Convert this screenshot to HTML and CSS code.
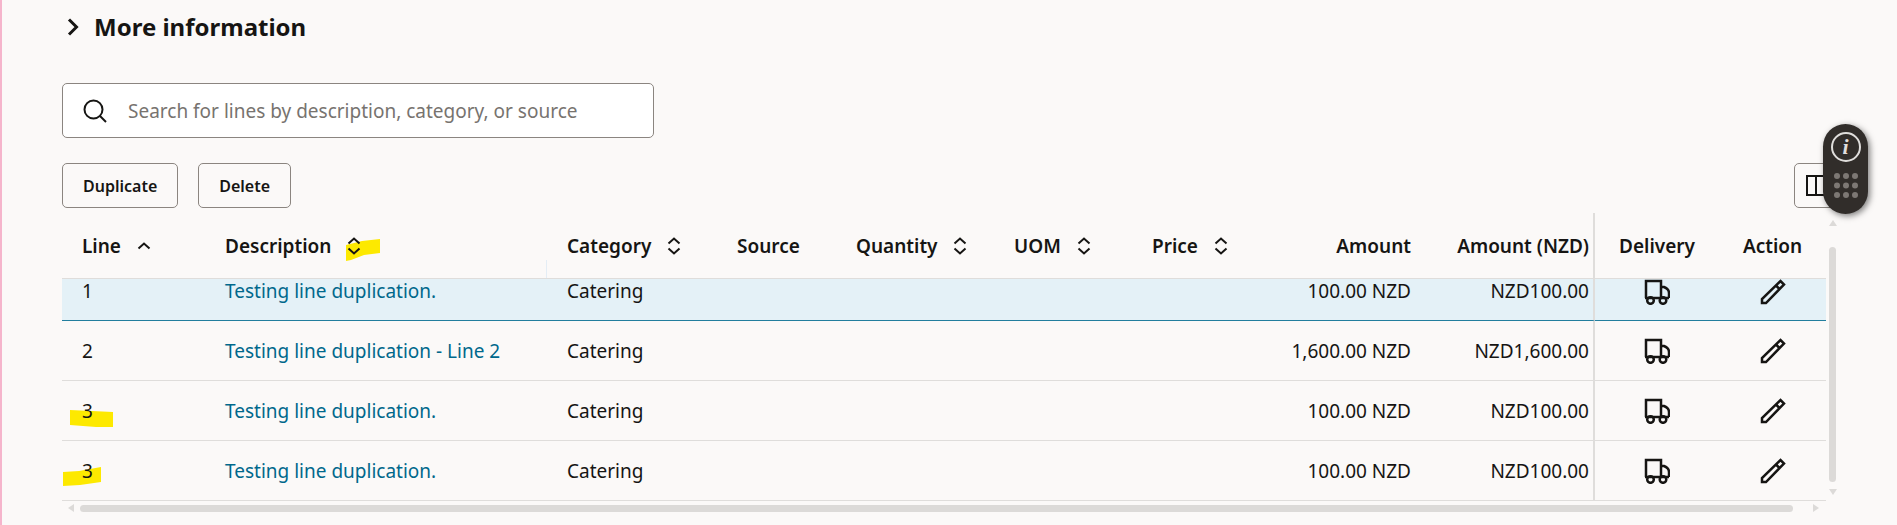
FILE: index.html
```html
<!DOCTYPE html>
<html lang="en">
<head>
  <meta charset="UTF-8">
  <meta name="viewport" content="width=device-width, initial-scale=1.0">
  <title>Requisition lines</title>
  <link rel="stylesheet" href="styles.css">
</head>
<body>
  <svg class="defs" aria-hidden="true">
    <symbol id="sort" viewBox="0 0 14 18"><path d="M1.5 6.500 7 1.500l5.500 5M1.500 11.500 7 16.500l5.500-5"/></symbol>
    <symbol id="sort-up" viewBox="0 0 14 18"><path d="M1.500 11.500 7 6.500l5.500 5"/></symbol>
    <symbol id="truck" viewBox="0 0 26 26"><path d="M2 19V2h15v17M1 19h24M17 8h3q5 2 5 6v5"/><circle class="wheel" cx="6.500" cy="21.500" r="3.300"/><circle class="wheel" cx="19" cy="21.500" r="3.300"/></symbol>
    <symbol id="pencil" viewBox="0 0 26 26"><path d="M2 24v-4L20.500 2 24 5.500 6 24zM16 6.500l3.500 3.500"/></symbol>
  </svg>

  <main class="page">
    <h2 class="more">
      <button type="button" aria-expanded="false">
        <svg class="chevron" viewBox="0 0 12 18"><path d="M2 1.500 9.500 9 2 16.500"/></svg>
        More information
      </button>
    </h2>

    <label class="search">
      <svg class="search-icon" viewBox="0 0 24 24"><circle cx="10.500" cy="10.500" r="9"/><path d="m17 17 6 6"/></svg>
      <input type="text" aria-label="Search lines" placeholder="Search for lines by description, category, or source">
    </label>

    <div class="toolbar">
      <button type="button" class="btn">Duplicate</button>
      <button type="button" class="btn">Delete</button>
      <button type="button" class="btn btn-columns" aria-label="Columns">
        <svg viewBox="0 0 29 21"><path d="M1 1h27v19H1zM10 1v19M19 1v19"/></svg>
      </button>
    </div>

    <div class="grid">
      <table class="lines">
        <colgroup>
          <col class="c-line"><col class="c-desc"><col class="c-cat"><col class="c-source"><col class="c-qty"><col class="c-uom">
          <col class="c-price"><col class="c-amount"><col class="c-nzd"><col class="c-delivery"><col class="c-action">
        </colgroup>
        <thead>
          <tr>
            <th>Line <svg class="sort"><use href="#sort-up"/></svg></th>
            <th class="resize">
              <svg class="mark mark-head" viewBox="0 0 34 22"><path d="M0 6 16 2 34 0v14L18 16 5 21 0 22z"/></svg>
              <span>Description <svg class="sort"><use href="#sort"/></svg></span>
            </th>
            <th>Category <svg class="sort"><use href="#sort"/></svg></th>
            <th>Source</th>
            <th>Quantity <svg class="sort"><use href="#sort"/></svg></th>
            <th>UOM <svg class="sort"><use href="#sort"/></svg></th>
            <th>Price <svg class="sort"><use href="#sort"/></svg></th>
            <th class="num">Amount</th>
            <th class="num nzd">Amount (NZD)</th>
            <th class="mid">Delivery</th>
            <th class="mid">Action</th>
          </tr>
        </thead>
        <tbody>
          <tr class="selected">
            <td>1</td>
            <td><a href="#">Testing line duplication.</a></td>
            <td>Catering</td>
            <td></td><td></td><td></td><td></td>
            <td class="num">100.00 NZD</td>
            <td class="num nzd">NZD100.00</td>
            <td class="mid"><button type="button" class="icon-btn" aria-label="Delivery"><svg><use href="#truck"/></svg></button></td>
            <td class="mid"><button type="button" class="icon-btn" aria-label="Edit"><svg><use href="#pencil"/></svg></button></td>
          </tr>
          <tr>
            <td>2</td>
            <td><a href="#">Testing line duplication - Line 2</a></td>
            <td>Catering</td>
            <td></td><td></td><td></td><td></td>
            <td class="num">1,600.00 NZD</td>
            <td class="num nzd">NZD1,600.00</td>
            <td class="mid"><button type="button" class="icon-btn" aria-label="Delivery"><svg><use href="#truck"/></svg></button></td>
            <td class="mid"><button type="button" class="icon-btn" aria-label="Edit"><svg><use href="#pencil"/></svg></button></td>
          </tr>
          <tr>
            <td>
              <svg class="mark mark-a" viewBox="0 0 43 17"><path d="M0 0 22 1 43 2v15H26L0 15z"/></svg>
              <span>3</span>
            </td>
            <td><a href="#">Testing line duplication.</a></td>
            <td>Catering</td>
            <td></td><td></td><td></td><td></td>
            <td class="num">100.00 NZD</td>
            <td class="num nzd">NZD100.00</td>
            <td class="mid"><button type="button" class="icon-btn" aria-label="Delivery"><svg><use href="#truck"/></svg></button></td>
            <td class="mid"><button type="button" class="icon-btn" aria-label="Edit"><svg><use href="#pencil"/></svg></button></td>
          </tr>
          <tr>
            <td>
              <svg class="mark mark-b" viewBox="0 0 38 19"><path d="M0 5 16 4 38 0v15L17 18 0 19z"/></svg>
              <span>3</span>
            </td>
            <td><a href="#">Testing line duplication.</a></td>
            <td>Catering</td>
            <td></td><td></td><td></td><td></td>
            <td class="num">100.00 NZD</td>
            <td class="num nzd">NZD100.00</td>
            <td class="mid"><button type="button" class="icon-btn" aria-label="Delivery"><svg><use href="#truck"/></svg></button></td>
            <td class="mid"><button type="button" class="icon-btn" aria-label="Edit"><svg><use href="#pencil"/></svg></button></td>
          </tr>
        </tbody>
      </table>

      <div class="vbar">
        <svg class="arrow" viewBox="0 0 8 6"><path d="M0 6 4 0l4 6z"/></svg>
        <div class="thumb"></div>
        <svg class="arrow" viewBox="0 0 8 6"><path d="m0 0 4 6 4-6z"/></svg>
      </div>
      <div class="hbar">
        <svg class="arrow" viewBox="0 0 6 8"><path d="M6 0 0 4l6 4z"/></svg>
        <div class="thumb"></div>
        <svg class="arrow" viewBox="0 0 6 8"><path d="m0 0 6 4-6 4z"/></svg>
      </div>
    </div>
  </main>

  <aside class="guide">
    <button type="button" class="info" aria-label="Help">i</button>
    <svg class="dots" viewBox="0 0 24 25">
      <circle cx="3" cy="3" r="3"/><circle cx="12" cy="3" r="3"/><circle cx="21" cy="3" r="3"/>
      <circle cx="3" cy="12.500" r="3"/><circle cx="12" cy="12.500" r="3"/><circle cx="21" cy="12.500" r="3"/>
      <circle cx="3" cy="22" r="3"/><circle cx="12" cy="22" r="3"/><circle cx="21" cy="22" r="3"/>
    </svg>
  </aside>
</body>
</html>
```
FILE: styles.css
```css
* {
  box-sizing: border-box;
}
body {
  margin: 0;
  min-height: 100vh;
  background: #fbf9f8;
  color: #161513;
  font-family: "Noto Sans", "Open Sans", sans-serif;
  font-size: 19px;
  line-height: 24px;
  border-left: 2px solid #f5b5cc;
}
button, input {
  font: inherit;
  color: inherit;
}
svg {
  fill: none;
  stroke: #161513;
  stroke-width: 2;
}
.defs {
  position: absolute;
  width: 0;
  height: 0;
}
.page {
  padding: 11px 58px 0 60px;
}

/* heading and search */
.more {
  margin: 0 0 40px;
  font-size: 24px;
  line-height: 32px;
}
.more button {
  display: flex;
  align-items: center;
  gap: 15px;
  padding: 0 0 0 5px;
  border: 0;
  background: none;
  font-weight: bold;
}
.chevron {
  width: 12px;
  height: 18px;
  stroke-width: 3;
}
.search {
  display: flex;
  align-items: center;
  gap: 21px;
  width: 592px;
  max-width: 100%;
  height: 55px;
  padding: 0 20px;
  background: #fff;
  border: 1px solid #8b8580;
  border-radius: 5px;
}
.search-icon {
  width: 24px;
  height: 24px;
  flex: none;
}
.search input {
  flex: 1;
  min-width: 0;
  padding: 0;
  border: 0;
  outline: 0;
  background: none;
}
.search input::placeholder {
  color: #77736f;
  opacity: 1;
}

/* toolbar */
.toolbar {
  display: flex;
  gap: 20px;
  margin: 25px 0 5px;
}
.btn {
  height: 45px;
  padding: 0 20px;
  border: 1px solid #8b8580;
  border-radius: 5px;
  background: none;
  font-size: 16px;
  font-weight: 600;
}
.btn-columns {
  margin-left: auto;
  width: 45px;
  padding: 0 0 0 11px;
}
.btn-columns svg {
  display: block;
  width: 29px;
  height: 21px;
}

/* lines table */
.grid {
  display: grid;
  grid-template-columns: minmax(0, 1fr) 13px;
}
.lines {
  width: 100%;
  table-layout: fixed;
  border-collapse: separate;
  border-spacing: 0;
}
.c-line { width: 143px; }
.c-desc { width: 342px; }
.c-cat { width: 170px; }
.c-source { width: 119px; }
.c-qty { width: 158px; }
.c-uom { width: 138px; }
.c-price { width: 117px; }
.c-amount { width: 182px; }
.c-nzd { width: 164px; }
.c-delivery { width: 124px; }
.c-action { width: 107px; }
th, td {
  position: relative;
  height: 60px;
  padding: 0 20px;
  border-bottom: 1px solid #dfdddb;
  text-align: left;
  white-space: nowrap;
}
th {
  height: 66px;
  font-weight: 600;
}
th span, td span {
  position: relative;
}
.selected td {
  height: 42px;
  padding-bottom: 17px;
  background: #e4f1f7;
  border-bottom-color: #227e9e;
}
.lines .num {
  text-align: right;
}
.lines .nzd {
  padding-right: 4px;
  border-right: 2px solid #dfdddb;
}
.lines .mid {
  padding-left: 0;
  padding-right: 0;
  text-align: center;
}
.resize::after {
  content: "";
  position: absolute;
  right: 0;
  bottom: 0;
  height: 18px;
  border-right: 1px solid #e4edf5;
}
.lines a {
  color: #00688c;
  text-decoration: none;
}
.sort {
  width: 14px;
  height: 18px;
  margin-left: 11px;
  vertical-align: -2px;
}
.icon-btn {
  display: inline-block;
  margin: -3px 0;
  padding: 0;
  border: 0;
  background: none;
  vertical-align: middle;
}
.icon-btn svg {
  display: block;
  width: 26px;
  height: 26px;
  stroke-width: 2.5;
}
.lines .nzd,
.lines .mid {
  line-height: 20px;
}

/* highlighter marks */
.mark {
  position: absolute;
  fill: #fde900;
  stroke: none;
}
.mark-head {
  left: 141px;
  top: 26px;
  width: 34px;
  height: 22px;
}
.mark-a {
  left: 8px;
  top: 29px;
  width: 43px;
  height: 17px;
}
.mark-b {
  left: 1px;
  top: 26px;
  width: 38px;
  height: 19px;
}

/* scrollbars */
.vbar, .hbar {
  display: flex;
  align-items: center;
}
.vbar {
  flex-direction: column;
  gap: 7px;
  padding: 7px 0 6px;
}
.hbar {
  gap: 6px;
  padding: 3px 7px 0 6px;
}
.thumb {
  flex: 1;
  border-radius: 4px;
  background: #dcdad8;
}
.vbar .thumb {
  width: 7px;
  margin-top: 14px;
}
.hbar .thumb {
  height: 7px;
  margin-right: 14px;
}
.arrow {
  flex: none;
  width: 8px;
  height: 6px;
  fill: #dcdad8;
  stroke: none;
}
.hbar .arrow {
  width: 6px;
  height: 8px;
}

/* floating help widget */
.guide {
  position: absolute;
  top: 124px;
  right: 29px;
  display: flex;
  flex-direction: column;
  align-items: center;
  gap: 11px;
  width: 45px;
  height: 90px;
  padding-top: 8px;
  border-radius: 23px;
  background: #312d2a;
  box-shadow: 2px 2px 6px rgba(0, 0, 0, 0.5);
}
.info {
  width: 30px;
  height: 30px;
  padding: 0;
  border: 2px solid #e0dedc;
  border-radius: 50%;
  background: none;
  color: #e0dedc;
  font: italic bold 22px/24px "Liberation Serif", serif;
}
.dots {
  width: 24px;
  height: 25px;
  fill: #7d7874;
  stroke: none;
}
```
